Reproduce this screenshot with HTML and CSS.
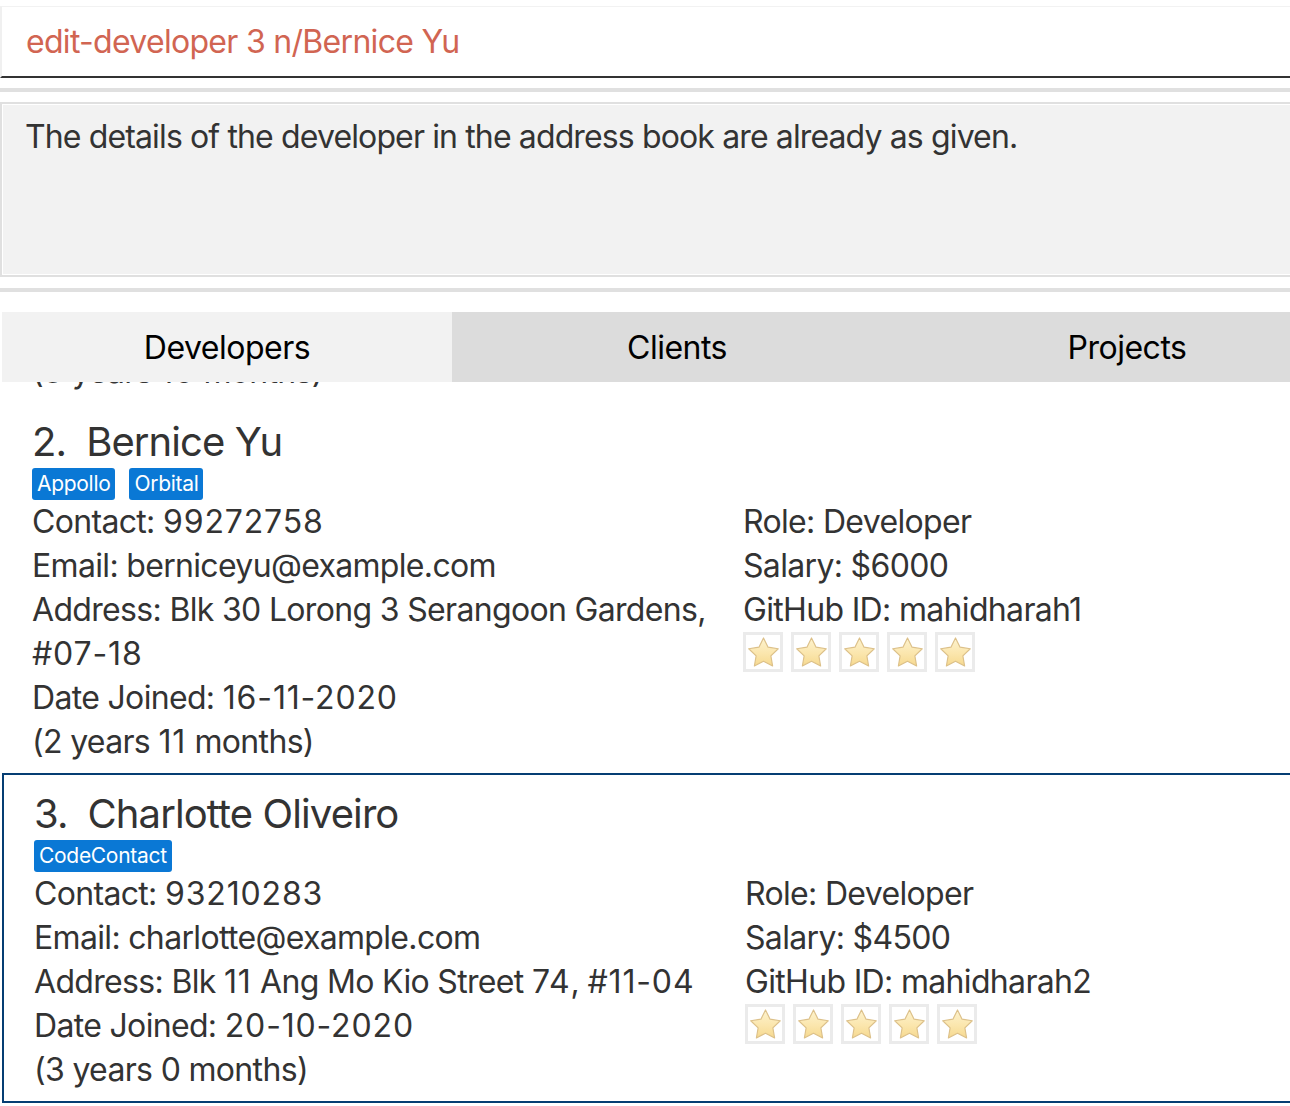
FILE: index.html
```html
<!DOCTYPE html>
<html lang="en">
<head>
<meta charset="utf-8">
<title>Developers</title>
<link rel="stylesheet" href="styles.css">
</head>
<body>
<svg class="defs" width="0" height="0" aria-hidden="true">
  <defs>
    <linearGradient id="starFill" x1="0" y1="0" x2="0" y2="1">
      <stop offset="0" stop-color="#fdf3cf"/>
      <stop offset="0.55" stop-color="#fbe6ad"/>
      <stop offset="1" stop-color="#f6d98f"/>
    </linearGradient>
    <symbol id="star" viewBox="0 0 34 34">
      <path d="M17 2 L21.7 11.5 L32.2 13.1 L24.6 20.5 L26.4 30.9 L17 26 L7.6 30.9 L9.4 20.5 L1.8 13.1 L12.3 11.5 Z" fill="url(#starFill)" stroke="#dcc089" stroke-width="1.2" stroke-linejoin="round"/>
    </symbol>
  </defs>
</svg>
<div class="app">
  <div class="cmd-box">
    <div class="cmd-field">edit-developer 3 n/Bernice Yu</div>
  </div>
  <div class="divider"></div>
  <div class="result">
    <div class="result-inner">The details of the developer in the address book are already as given.</div>
  </div>
  <div class="divider divider-low"></div>
  <div class="tabs">
    <div class="tab tab-active">Developers</div>
    <div class="tab">Clients</div>
    <div class="tab">Projects</div>
  </div>
  <div class="list">
    <div class="list-inner">
      <div class="card card-partial">
        <div class="line">(<span class="num">3</span> years <span class="num">10</span> months)</div>
      </div>

      <div class="card">
        <div class="name"><span class="index">2.</span>Bernice Yu</div>
        <div class="tags"><span class="tag">Appollo</span><span class="tag">Orbital</span></div>
        <div class="cols">
          <div class="col-left">
            <div class="line">Contact: <span class="num">99272758</span></div>
            <div class="line">Email: berniceyu@example.com</div>
            <div class="line">Address: Blk 30 Lorong 3 Serangoon Gardens, <span class="num">#07-18</span></div>
            <div class="line">Date Joined: <span class="num">16-11-2020</span></div>
            <div class="line">(2 years <span class="num">11</span> months)</div>
          </div>
          <div class="col-right">
            <div class="line">Role: Developer</div>
            <div class="line">Salary: $6000</div>
            <div class="line">GitHub ID: mahidharah1</div>
            <div class="stars">
              <span class="star"><svg viewBox="0 0 34 34"><use href="#star"/></svg></span>
              <span class="star"><svg viewBox="0 0 34 34"><use href="#star"/></svg></span>
              <span class="star"><svg viewBox="0 0 34 34"><use href="#star"/></svg></span>
              <span class="star"><svg viewBox="0 0 34 34"><use href="#star"/></svg></span>
              <span class="star"><svg viewBox="0 0 34 34"><use href="#star"/></svg></span>
            </div>
          </div>
        </div>
      </div>

      <div class="card card-selected">
        <div class="name"><span class="index">3.</span>Charlotte Oliveiro</div>
        <div class="tags"><span class="tag">CodeContact</span></div>
        <div class="cols">
          <div class="col-left">
            <div class="line">Contact: <span class="num">93210283</span></div>
            <div class="line">Email: charlotte@example.com</div>
            <div class="line">Address: Blk <span class="num">11</span> Ang Mo Kio Street <span class="num">74</span>, <span class="num">#11-04</span></div>
            <div class="line">Date Joined: <span class="num">20-10-2020</span></div>
            <div class="line">(3 years 0 months)</div>
          </div>
          <div class="col-right">
            <div class="line">Role: Developer</div>
            <div class="line">Salary: $4500</div>
            <div class="line">GitHub ID: mahidharah2</div>
            <div class="stars">
              <span class="star"><svg viewBox="0 0 34 34"><use href="#star"/></svg></span>
              <span class="star"><svg viewBox="0 0 34 34"><use href="#star"/></svg></span>
              <span class="star"><svg viewBox="0 0 34 34"><use href="#star"/></svg></span>
              <span class="star"><svg viewBox="0 0 34 34"><use href="#star"/></svg></span>
              <span class="star"><svg viewBox="0 0 34 34"><use href="#star"/></svg></span>
            </div>
          </div>
        </div>
      </div>
    </div>
  </div>
</div>
</body>
</html>
```

FILE: styles.css
```css
html, body {
  margin: 0;
  padding: 0;
  background: #ffffff;
  overflow: hidden;
}

body {
  width: 1290px;
  height: 1106px;
  font-family: Inter, "Noto Sans", "Liberation Sans", sans-serif;
  color: #333333;
}

.defs {
  position: absolute;
  width: 0;
  height: 0;
}

.app {
  width: 1352px;
  padding-top: 6px;
  display: flex;
  flex-direction: column;
}

/* command box */
.cmd-box {
  height: 69px;
  border-top: 1px solid #f2f2f2;
  border-left: 2px solid #f0f0f0;
  border-bottom: 2px solid #333333;
  background: #ffffff;
  display: flex;
  align-items: center;
  padding-left: 24px;
}

.cmd-field {
  font-size: 32px;
  color: #d16552;
  letter-spacing: -0.7px;
}

.divider {
  height: 4px;
  background: #e0e0e0;
  margin-top: 10px;
}

.divider-low {
  margin-top: 11px;
}

/* result box */
.result {
  margin-top: 10px;
  border: 2px solid #e0e0e0;
  border-right: none;
  background: #ffffff;
  padding: 1px 0 1px 1px;
}

.result-inner {
  height: 169px;
  background: #f2f2f2;
  padding: 12px 0 0 22px;
  box-sizing: border-box;
  font-size: 32px;
  line-height: 40px;
  letter-spacing: -0.87px;
}

/* tabs */
.tabs {
  margin-top: 20px;
  margin-left: 2px;
  height: 70px;
  display: flex;
}

.tab {
  width: 450px;
  height: 70px;
  display: flex;
  align-items: center;
  justify-content: center;
  background: #dcdcdc;
  color: #000000;
  font-size: 32px;
  letter-spacing: -0.5px;
}

.tab-active {
  background: #f2f2f2;
}

/* list */
.list {
  margin-left: 2px;
  height: 724px;
  overflow: hidden;
}

.list-inner {
  margin-top: -32px;
  display: flex;
  flex-direction: column;
}

.card {
  padding: 14px 30px 9px 30px;
}

.card-partial {
  padding-top: 0;
}

.card-selected {
  border: 2px solid #053e73;
  margin-right: -20px;
}

.name {
  font-size: 40px;
  line-height: 50px;
  height: 50px;
  letter-spacing: -0.9px;
  white-space: nowrap;
}

.index {
  display: inline-block;
  margin-right: 20px;
}

.tags {
  margin-top: 1px;
  height: 32px;
  display: flex;
  gap: 14px;
}

.tag {
  height: 32px;
  line-height: 32px;
  padding: 0 5px;
  background: #0a78d5;
  color: #ffffff;
  font-size: 21px;
  border-radius: 3px;
  letter-spacing: -0.3px;
}

.cols {
  display: grid;
  grid-template-columns: 711px 1fr;
}

.line {
  font-size: 32px;
  line-height: 44px;
  letter-spacing: -0.67px;
}

.num {
  letter-spacing: 0.85px;
}

.stars {
  display: flex;
  gap: 8px;
  height: 44px;
}

.star {
  width: 40px;
  height: 40px;
  box-sizing: border-box;
  border: 3px solid #ebebeb;
  background: #ffffff;
  display: flex;
  align-items: center;
  justify-content: center;
}

.star svg {
  width: 33px;
  height: 33px;
}
```
